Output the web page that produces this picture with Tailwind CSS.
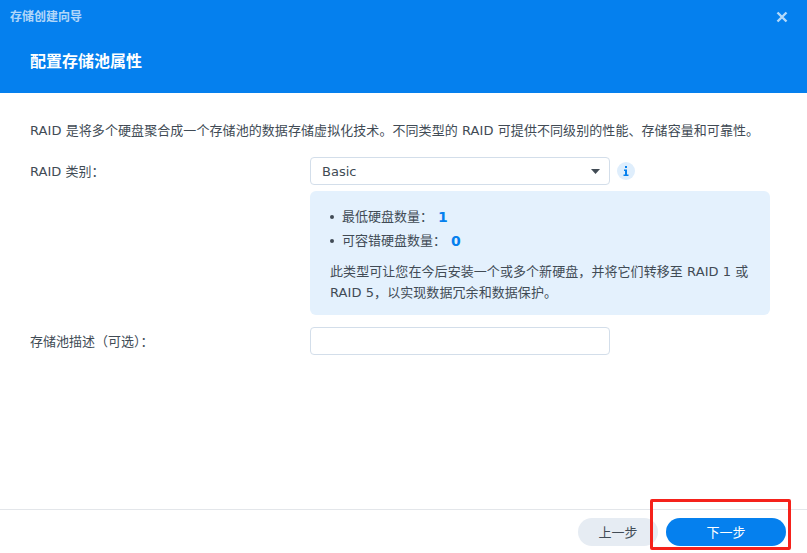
<!DOCTYPE html>
<html lang="zh">
<head>
<meta charset="utf-8">
<script src="https://cdn.jsdelivr.net/npm/@tailwindcss/browser@4"></script>
</head>
<body class="m-0 bg-white">
<div class="relative w-[807px] h-[553px] overflow-hidden flex flex-col bg-white text-[13px] text-[#414b55] font-['DejaVu_Sans','Noto_Sans_CJK_SC',sans-serif]">
  <header class="h-[93px] shrink-0 bg-[#0580ee] flex flex-col">
    <div class="h-[34px] pl-[10px] pr-[19px] flex items-center justify-between">
      <span class="text-[12px] font-bold text-white/70">存储创建向导</span>
      <svg class="w-[12px] h-[12px]" viewBox="0 0 12 12"><path d="M1.5 1.5L10.5 10.5M10.5 1.5L1.5 10.5" stroke="#fff" stroke-opacity=".7" stroke-width="2.4" fill="none"/></svg>
    </div>
    <h1 class="mt-[16px] pl-[30px] text-[16px] leading-[24px] font-bold text-white">配置存储池属性</h1>
  </header>
  <main class="flex-1 px-[30px] pt-[29px]">
    <p class="leading-[18px] whitespace-nowrap tracking-[0.07px]">RAID 是将多个硬盘聚合成一个存储池的数据存储虚拟化技术。不同类型的 RAID 可提供不同级别的性能、存储容量和可靠性。</p>
    <div class="mt-[17px] flex">
      <label class="w-[280px] shrink-0 h-[28px] leading-[30px]">RAID 类别：</label>
      <div class="flex-1">
        <div class="flex items-center gap-[7px]">
          <div class="w-[300px] h-[28px] border border-[#d3deea] rounded-[4px] pl-[11px] pr-[9px] flex items-center justify-between bg-white">
            <span class="leading-[28px] pt-[1px]">Basic</span>
            <svg class="w-[9px] h-[5px]" viewBox="0 0 9 5"><path d="M0 0H9L4.5 5Z" fill="#414b55"/></svg>
          </div>
          <span class="w-[18px] h-[18px] rounded-full bg-[#dfeefc] flex items-center justify-center">
            <svg class="w-[6px] h-[10px]" viewBox="0 0 6 10"><path d="M2 0H4V2H2ZM1 3.5H4V8.5H5.5V10H.5V8.5H2V5H1Z" fill="#0580ee"/></svg>
          </span>
        </div>
        <div class="mt-[6px] w-[460px] h-[124px] bg-[#e4f1fd] rounded-[6px] px-[20px] pt-[17px]">
          <ul class="flex flex-col gap-[6px]">
            <li class="flex items-center h-[18px]"><span class="w-[4px] h-[4px] rounded-full bg-[#414b55] mr-[8px]"></span>最低硬盘数量：<b class="ml-[5px] text-[14px] text-[#0580ee]">1</b></li>
            <li class="flex items-center h-[18px]"><span class="w-[4px] h-[4px] rounded-full bg-[#414b55] mr-[8px]"></span>可容错硬盘数量：<b class="ml-[5px] text-[14px] text-[#0580ee]">0</b></li>
          </ul>
          <p class="mt-[11px] leading-[21px] tracking-[0.07px]">此类型可让您在今后安装一个或多个新硬盘，并将它们转移至 RAID 1 或 RAID 5，以实现数据冗余和数据保护。</p>
        </div>
      </div>
    </div>
    <div class="mt-[12px] flex">
      <label class="w-[280px] shrink-0 h-[28px] leading-[30px]">存储池描述（可选）：</label>
      <div class="w-[300px] h-[28px] border border-[#d3deea] rounded-[4px] bg-white"></div>
    </div>
  </main>
  <footer class="h-[44px] shrink-0 border-t border-[#e3e6ea] flex justify-end items-start pt-[8px] pr-[21px] gap-[8px]">
    <button class="w-[80px] h-[28px] pt-[1px] rounded-full bg-[#e6ecf3] text-[#414b55]">上一步</button>
    <button class="w-[120px] h-[28px] pt-[1px] rounded-full bg-[#0580ee] text-white">下一步</button>
  </footer>
  <div class="absolute left-[650px] top-[499px] w-[141px] h-[51px] border-[3px] border-[#f5221b] rounded-[2px]"></div>
</div>
</body>
</html>
